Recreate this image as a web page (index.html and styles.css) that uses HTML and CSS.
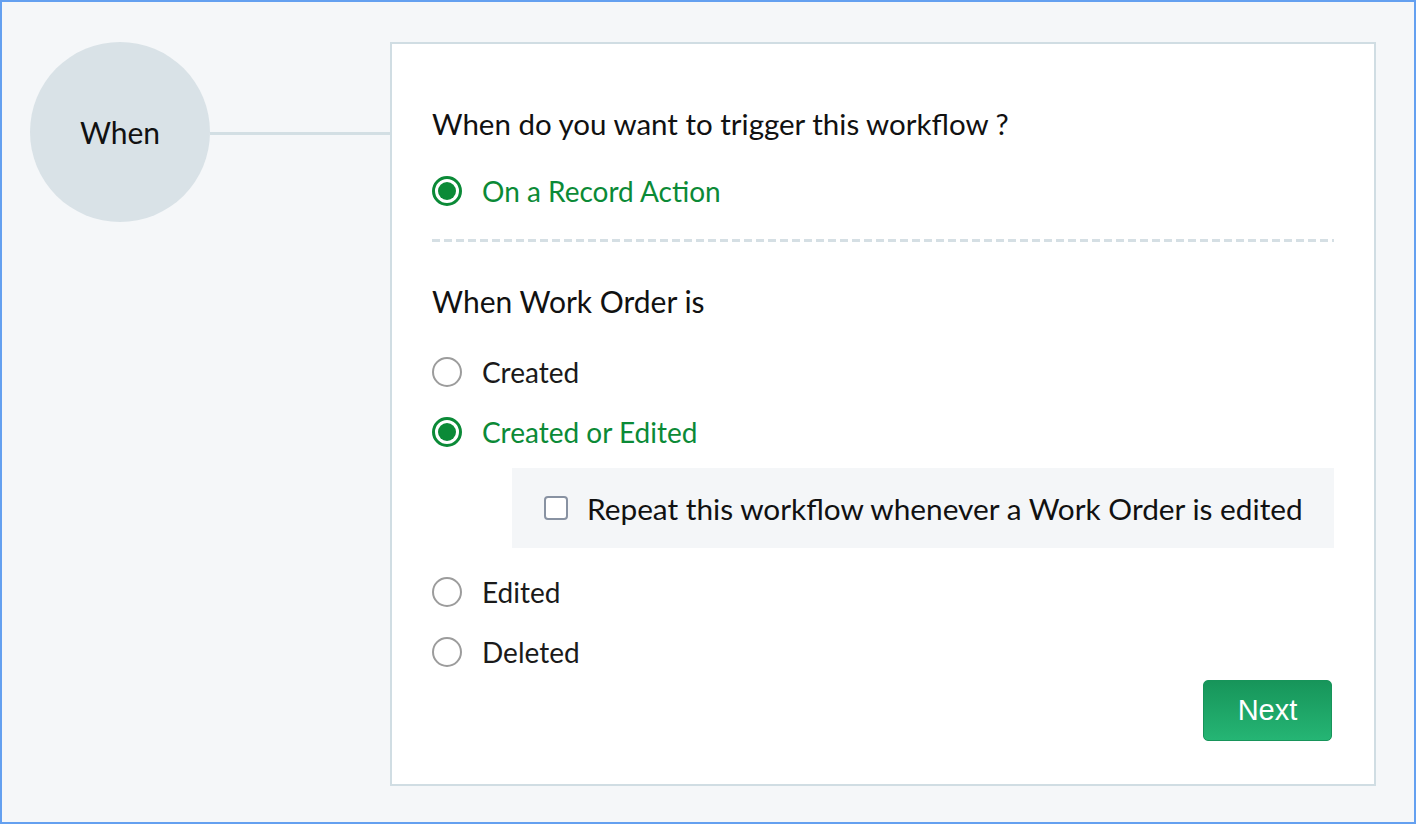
FILE: index.html
```html
<!DOCTYPE html>
<html>
<head>
<meta charset="utf-8">
<link rel="stylesheet" href="styles.css">
</head>
<body>
<div class="frame">
  <div class="step">
    <div class="bubble">When</div>
    <div class="connector"></div>
  </div>
  <div class="card">
    <h2 class="question">When do you want to trigger this workflow ?</h2>
    <label class="option checked"><span class="radio"></span><span class="label">On a Record Action</span></label>
    <div class="divider"></div>
    <h3 class="subhead">When Work Order is</h3>
    <div class="options">
      <label class="option"><span class="radio"></span><span class="label">Created</span></label>
      <label class="option checked"><span class="radio"></span><span class="label">Created or Edited</span></label>
      <div class="repeat"><span class="checkbox"></span><span class="repeat-label">Repeat this workflow whenever a Work Order is edited</span></div>
      <label class="option"><span class="radio"></span><span class="label">Edited</span></label>
      <label class="option"><span class="radio"></span><span class="label">Deleted</span></label>
    </div>
    <div class="actions"><button class="next">Next</button></div>
  </div>
</div>
</body>
</html>
```
FILE: styles.css
```css
* { box-sizing: border-box; }
html, body { margin: 0; padding: 0; }
body { font-family: Lato, "Open Sans", sans-serif; color: #1a1a1a; }
.frame {
  width: 1416px; height: 824px;
  border: 2px solid #64a0f0;
  background: #f5f7f9;
  display: flex;
  padding: 40px 0 0 28px;
}
.step { display: flex; align-items: flex-start; }
.bubble {
  width: 180px; height: 180px; border-radius: 50%;
  background: #d9e2e7;
  display: flex; align-items: center; justify-content: center;
  font-size: 30px; color: #111;
}
.connector { width: 180px; height: 3px; background: #d3dfe4; margin-top: 90px; }
.card {
  width: 986px; height: 744px;
  background: #fff;
  border: 2px solid #d0dde3;
  padding: 64px 40px 0 40px;
  display: flex; flex-direction: column;
}
.question { margin: 0; font-weight: 400; font-size: 29.5px; line-height: 32px; color: #111; }
.option { display: flex; align-items: center; height: 60px; font-size: 28px; cursor: pointer; }
.card > .option { margin-top: 21px; }
.radio {
  width: 30px; height: 30px; border-radius: 50%;
  border: 2px solid #9c9c9c; margin-right: 20px; flex: none;
  display: flex; align-items: center; justify-content: center;
}
.option.checked .radio { border: 3px solid #0b8a37; }
.option.checked .radio::after {
  content: ""; width: 18px; height: 18px; border-radius: 50%; background: #0b8a37;
}
.option.checked .label { color: #0b8a37; }
.divider {
  margin-top: 18px; height: 3px;
  background: repeating-linear-gradient(90deg, #d5dfe4 0 8px, transparent 8px 12px);
}
.subhead { margin: 43px 0 0; font-weight: 400; font-size: 30px; line-height: 32px; color: #111; }
.options { margin-top: 25px; display: flex; flex-direction: column; }
.repeat {
  margin: 6px 0 14px 80px;
  height: 80px; background: #f4f6f8;
  display: flex; align-items: center; padding-left: 32px;
}
.checkbox {
  width: 24px; height: 24px; border: 2px solid #8892a2; border-radius: 4px;
  background: #fff; margin-right: 19px; flex: none;
}
.repeat-label { font-size: 29.8px; color: #111; }
.actions { display: flex; justify-content: flex-end; margin-top: -2px; padding-right: 2px; }
.next {
  width: 129px; height: 61px; border-radius: 5px;
  border: 1px solid #17945a;
  background: linear-gradient(#17955a, #25b574);
  color: #fff; font-family: "Liberation Sans", Arial, sans-serif; font-size: 29px;
  padding: 0;
}
```
